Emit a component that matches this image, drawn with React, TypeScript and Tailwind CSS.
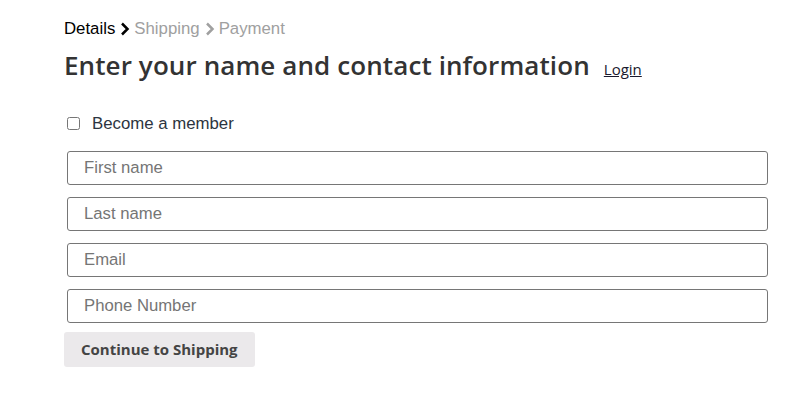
import { useState } from "react";

const Chevron = ({ color }: { color: string }) => (
  <svg width="10" height="14" viewBox="0 0 10 14" className="ml-[5px] mr-[4px]">
    <polyline points="2,1.5 7.5,7 2,12.5" fill="none" stroke={color} strokeWidth="2.5" />
  </svg>
);

const fields = ["First name", "Last name", "Email", "Phone Number"];

const App = () => {
  const [member, setMember] = useState(false);

  return (
    <div className="min-h-screen w-full bg-white pl-[64px] pr-[33px] pt-[19px]">
      <nav className="flex items-center font-['Liberation_Sans',Arial,sans-serif] text-[16.8px] leading-[20px]">
        <span className="text-black">Details</span>
        <Chevron color="#000" />
        <span className="text-[#a0a0a0]">Shipping</span>
        <Chevron color="#a0a0a0" />
        <span className="text-[#a0a0a0]">Payment</span>
      </nav>

      <div className="mt-[6px] flex items-baseline font-['Open_Sans',sans-serif]">
        <h1 className="text-[26px] font-semibold leading-[40px] tracking-[0.1px] text-[#333333]">
          Enter your name and contact information
        </h1>
        <a href="#" className="ml-[14px] text-[15px] text-[#1a1a2e] underline">
          Login
        </a>
      </div>

      <label className="mt-[26px] flex items-center font-['Liberation_Sans',Arial,sans-serif] text-[16.8px] text-[#2c3440]">
        <input
          type="checkbox"
          checked={member}
          onChange={() => setMember(!member)}
          className="ml-[3px] mr-[12px] h-[13px] w-[13px]"
        />
        Become a member
      </label>

      <form className="mt-[15px] flex flex-col">
        <div className="flex flex-col gap-[12px] pl-[3px]">
          {fields.map((f) => (
            <input
              key={f}
              placeholder={f}
              className="h-[34px] w-full rounded-[3px] border border-[#767676] px-[16px] font-['Liberation_Sans',Arial,sans-serif] text-[16.7px] text-[#333] outline-none placeholder:text-[#757575]"
            />
          ))}
        </div>
        <div>
          <button
            type="button"
            className="mt-[9px] h-[35px] rounded-[3px] bg-[#ebe9eb] px-[17px] font-['Open_Sans',sans-serif] text-[15px] font-bold text-[#444]"
          >
            Continue to Shipping
          </button>
        </div>
      </form>
    </div>
  );
};

export default App;
